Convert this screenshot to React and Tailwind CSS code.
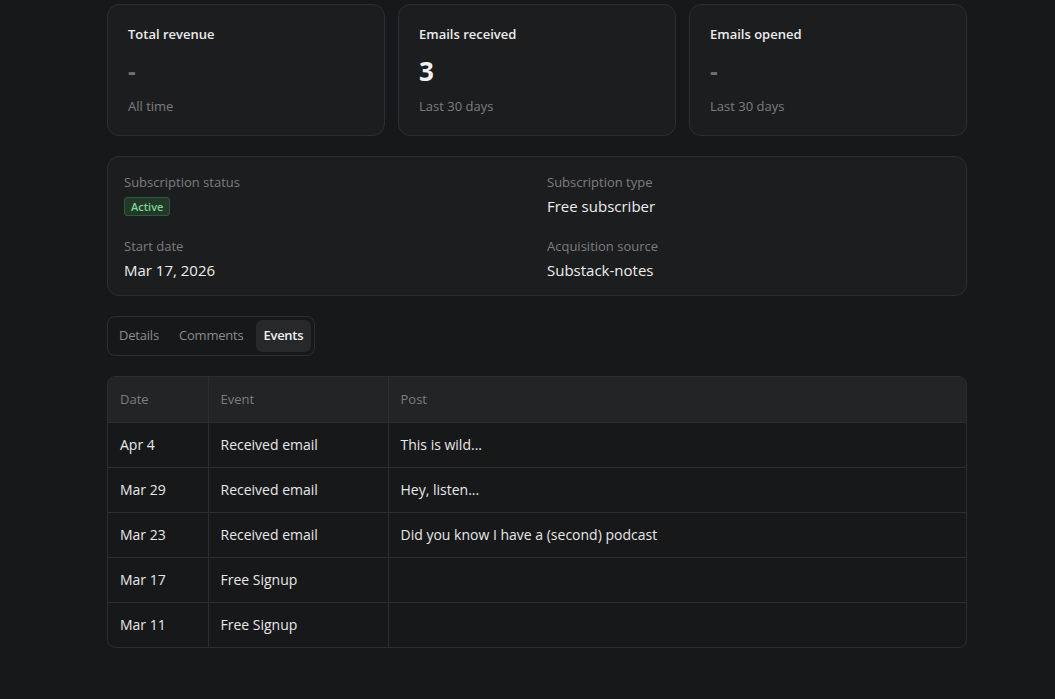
const stats = [
  { title: 'Total revenue', value: '-', note: 'All time' },
  { title: 'Emails received', value: '3', note: 'Last 30 days' },
  { title: 'Emails opened', value: '-', note: 'Last 30 days' },
];

const events = [
  { date: 'Apr 4', event: 'Received email', post: 'This is wild...' },
  { date: 'Mar 29', event: 'Received email', post: 'Hey, listen...' },
  { date: 'Mar 23', event: 'Received email', post: 'Did you know I have a (second) podcast' },
  { date: 'Mar 17', event: 'Free Signup', post: '' },
  { date: 'Mar 11', event: 'Free Signup', post: '' },
];

const StatCard = ({ title, value, note }) => (
  <div className="flex flex-col rounded-xl border border-[#2d2e31] bg-[#1c1d1f] px-5 pt-[19px] pb-[19px]">
    <div className="text-[13px] leading-5 font-semibold text-[#ececec]">{title}</div>
    {value === '-' ? (
      <div className="mt-[11px] text-[24px] leading-8 font-bold text-[#6f7073]">-</div>
    ) : (
      <div className="mt-[11px] text-[26px] leading-8 font-bold text-[#f2f2f2]">{value}</div>
    )}
    <div className="mt-[9px] text-[13px] leading-5 text-[#7c7d80]">{note}</div>
  </div>
);

const Field = ({ label, children }) => (
  <div className="flex flex-col gap-1">
    <div className="text-[13px] leading-5 text-[#7c7d80]">{label}</div>
    {children}
  </div>
);

export default function App() {
  return (
    <div
      className="min-h-screen bg-[#17181a] pl-[19px] text-[#e8e8e8]"
      style={{ fontFamily: '"Open Sans", "Noto Sans", sans-serif' }}
    >
      <div className="mx-auto w-[860px] pt-1 pb-12">
        {/* Stats */}
        <div className="grid grid-cols-3 gap-[13px]">
          {stats.map((s) => (
            <StatCard key={s.title} {...s} />
          ))}
        </div>

        {/* Subscription details */}
        <div className="mt-[20px] rounded-xl border border-[#2d2e31] bg-[#1c1d1f] px-4 pt-[15px] pb-[15px]">
          <div className="grid grid-cols-2 gap-x-5 gap-y-5">
            <Field label="Subscription status">
              <div className="flex h-5 items-center">
                <span className="rounded-[3px] border border-[#2f5a3a] bg-[#22392a] px-[6px] text-[11px] leading-[17px] font-semibold text-[#7fd38f]">
                  Active
                </span>
              </div>
            </Field>
            <Field label="Subscription type">
              <div className="text-[15px] leading-5 text-[#eeeeee]">Free subscriber</div>
            </Field>
            <Field label="Start date">
              <div className="text-[15px] leading-5 text-[#eeeeee]">Mar 17, 2026</div>
            </Field>
            <Field label="Acquisition source">
              <div className="text-[15px] leading-5 text-[#eeeeee]">Substack-notes</div>
            </Field>
          </div>
        </div>

        {/* Tabs */}
        <div className="mt-[20px] inline-flex gap-1 rounded-lg border border-[#2d2e31] p-[3px]">
          <button className="rounded-md px-2 h-[32px] text-[13px] tracking-[-0.2px] text-[#8a8b8e]">Details</button>
          <button className="rounded-md px-2 h-[32px] text-[13px] tracking-[-0.2px] text-[#8a8b8e]">Comments</button>
          <button className="rounded-md px-2 h-[32px] text-[13px] tracking-[-0.3px] font-semibold text-[#f0f0f0] bg-[#27282a]">
            Events
          </button>
        </div>

        {/* Events table */}
        <div className="mt-[20px] overflow-hidden rounded-lg border border-[#2d2e31]">
          <table className="w-full border-collapse text-left">
            <thead>
              <tr className="bg-[#232425]">
                <th className="h-[45px] w-[100px] border-r border-[#2d2e31] px-3 text-[13px] font-medium text-[#7c7d80]">Date</th>
                <th className="h-[45px] w-[180px] border-r border-[#2d2e31] px-3 text-[13px] font-medium text-[#7c7d80]">Event</th>
                <th className="h-[45px] px-3 text-[13px] font-medium text-[#7c7d80]">Post</th>
              </tr>
            </thead>
            <tbody>
              {events.map((e) => (
                <tr key={e.date} className="border-t border-[#2d2e31]">
                  <td className="h-[45px] border-r border-[#2d2e31] px-3 text-[14px] text-[#e8e8e8]">{e.date}</td>
                  <td className="h-[45px] border-r border-[#2d2e31] px-3 text-[14px] text-[#e8e8e8]">{e.event}</td>
                  <td className="h-[45px] px-3 text-[14px] text-[#e8e8e8]">{e.post}</td>
                </tr>
              ))}
            </tbody>
          </table>
        </div>
      </div>
    </div>
  );
}
